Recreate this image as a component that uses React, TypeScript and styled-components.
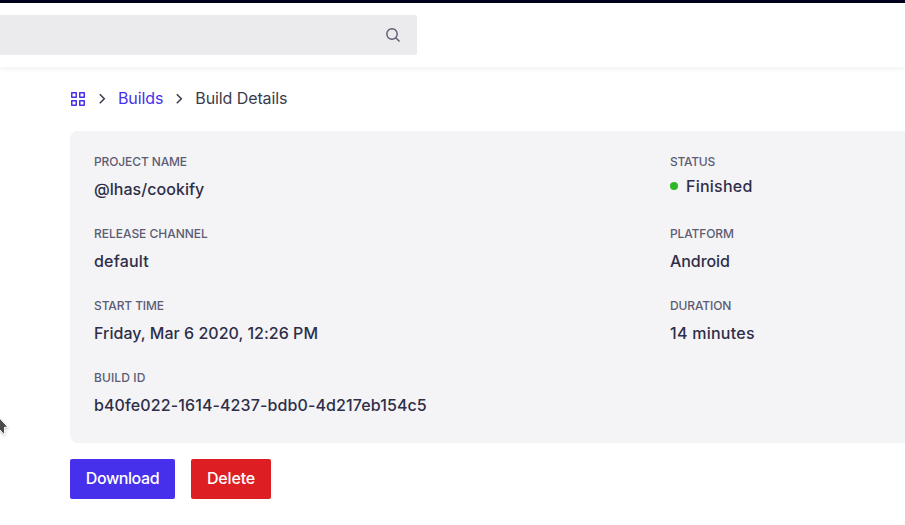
import React from 'react';
import styled, { createGlobalStyle } from 'styled-components';

const GlobalStyle = createGlobalStyle`
  *, *::before, *::after { box-sizing: border-box; }
  html, body { margin: 0; height: 100%; overflow: hidden; background: #fff; }
  body { font-family: Inter, "Liberation Sans", sans-serif; font-size: 16px; color: #2e2e48; }
`;

const Page = styled.div`
  position: relative;
  height: 525px;
  overflow: hidden;
`;

const Header = styled.header`
  display: flex;
  align-items: center;
  height: 67px;
  border-top: 3px solid #00001d;
  background: #fff;
  box-shadow: 0 2px 5px rgba(0, 0, 20, 0.06);
`;

const SearchBox = styled.div`
  display: flex;
  align-items: center;
  justify-content: flex-end;
  width: 417px;
  height: 40px;
  padding-right: 16px;
  border-radius: 0 2px 2px 0;
  background: #ebebed;
`;

const Main = styled.main`
  padding: 21px 0 0 70px;
`;

const Breadcrumb = styled.nav`
  display: flex;
  align-items: center;
  height: 20px;
  margin-bottom: 23px;

  svg { display: block; flex: none; }
`;

const Crumb = styled.span<{ $link?: boolean; $track?: number }>`
  line-height: 20px;
  letter-spacing: ${p => p.$track ?? 0}px;
  color: ${p => (p.$link ? '#4630eb' : '#3b3b4b')};
  white-space: nowrap;
`;

const Card = styled.section`
  display: grid;
  grid-template-columns: 576px 552px;
  grid-auto-rows: 72px;
  width: 1176px;
  height: 312px;
  padding: 24px 24px 0;
  border-radius: 8px;
  background: #f4f4f7;
`;

const Field = styled.div`
  display: flex;
  flex-direction: column;
  align-items: flex-start;
`;

const Label = styled.div<{ $track?: number }>`
  height: 14px;
  line-height: 14px;
  font-size: 12px;
  font-weight: 550;
  letter-spacing: ${p => p.$track ?? -0.12}px;
  color: #5c5c72;
  text-transform: uppercase;
`;

const Value = styled.div<{ $track?: number; $status?: boolean }>`
  display: flex;
  align-items: center;
  gap: 8px;
  height: 20px;
  margin-top: ${p => (p.$status ? 7 : 10)}px;
  line-height: 20px;
  font-weight: 550;
  letter-spacing: ${p => p.$track ?? 0}px;
  white-space: nowrap;
`;

const Dot = styled.span`
  width: 8px;
  height: 8px;
  border-radius: 50%;
  background: #2fb625;
`;

const Actions = styled.div`
  display: flex;
  gap: 16px;
  margin-top: 16px;
`;

const Button = styled.button<{ $danger?: boolean }>`
  width: ${p => (p.$danger ? 80 : 105)}px;
  height: 40px;
  padding: 0 0 2px;
  border: 0;
  border-radius: 2px;
  background: ${p => (p.$danger ? '#dd1f24' : '#4630eb')};
  color: #fff;
  font: 550 16px Inter, "Liberation Sans", sans-serif;
  letter-spacing: ${p => (p.$danger ? -0.18 : -0.42)}px;
`;

const Pointer = styled.svg`
  position: absolute;
  left: 0;
  top: 412px;
  filter: drop-shadow(0 1px 1px rgba(0, 0, 0, 0.25));
`;

const Chevron = styled.svg`
  margin: 0 12px;
`;

function ChevronIcon() {
  return (
    <Chevron width="8" height="12" viewBox="0 0 8 12" fill="none" stroke="#3b3b4b" strokeWidth="1.5">
      <path d="M1.8 2.3 6.3 6.8 1.8 11.3" />
    </Chevron>
  );
}

interface Detail {
  label: string;
  value: string;
  labelTrack?: number;
  valueTrack?: number;
  status?: boolean;
}

const details: Detail[] = [
  { label: 'Project name', value: '@lhas/cookify', valueTrack: 0.04 },
  { label: 'Status', value: 'Finished', labelTrack: -0.25, valueTrack: 0.25, status: true },
  { label: 'Release channel', value: 'default', labelTrack: -0.02, valueTrack: 0.2 },
  { label: 'Platform', value: 'Android', valueTrack: -0.07 },
  { label: 'Start time', value: 'Friday, Mar 6 2020, 12:26 PM', valueTrack: 0.02 },
  { label: 'Duration', value: '14 minutes', valueTrack: 0.26 },
  { label: 'Build ID', value: 'b40fe022-1614-4237-bdb0-4d217eb154c5', labelTrack: 0.1, valueTrack: 0.11 },
];

export default function App() {
  return (
    <Page>
      <GlobalStyle />
      <Header>
        <SearchBox>
          <svg width="16" height="16" viewBox="0 0 16 16" fill="none" stroke="#5c5c72" strokeWidth="1.4">
            <circle cx="7" cy="7" r="5.2" />
            <path d="m10.8 10.8 3.7 3.7" />
          </svg>
        </SearchBox>
      </Header>
      <Main>
        <Breadcrumb>
          <svg width="16" height="16" viewBox="0 0 16 16" fill="none" stroke="#4630eb" strokeWidth="1.5" strokeLinejoin="round">
            <path d="M1.75 2.75h4.5v4.5h-4.5zM9.75 2.75h4.5v4.5h-4.5zM1.75 10.75h4.5v4.5h-4.5zM9.75 10.75h4.5v4.5h-4.5z" />
          </svg>
          <ChevronIcon />
          <Crumb $link $track={-0.1}>Builds</Crumb>
          <ChevronIcon />
          <Crumb $track={-0.1}>Build Details</Crumb>
        </Breadcrumb>
        <Card>
          {details.map(d => (
            <Field key={d.label}>
              <Label $track={d.labelTrack}>{d.label}</Label>
              <Value $track={d.valueTrack} $status={d.status}>
                {d.status && <Dot />}
                {d.value}
              </Value>
            </Field>
          ))}
        </Card>
        <Actions>
          <Button>Download</Button>
          <Button $danger>Delete</Button>
        </Actions>
      </Main>
      <Pointer width="12" height="28" viewBox="0 0 12 28">
        <path d="M-8-2 8 15.2H4.6V23L-1 17Z" fill="#4b4b4b" stroke="#fff" strokeWidth="1" />
      </Pointer>
    </Page>
  );
}
